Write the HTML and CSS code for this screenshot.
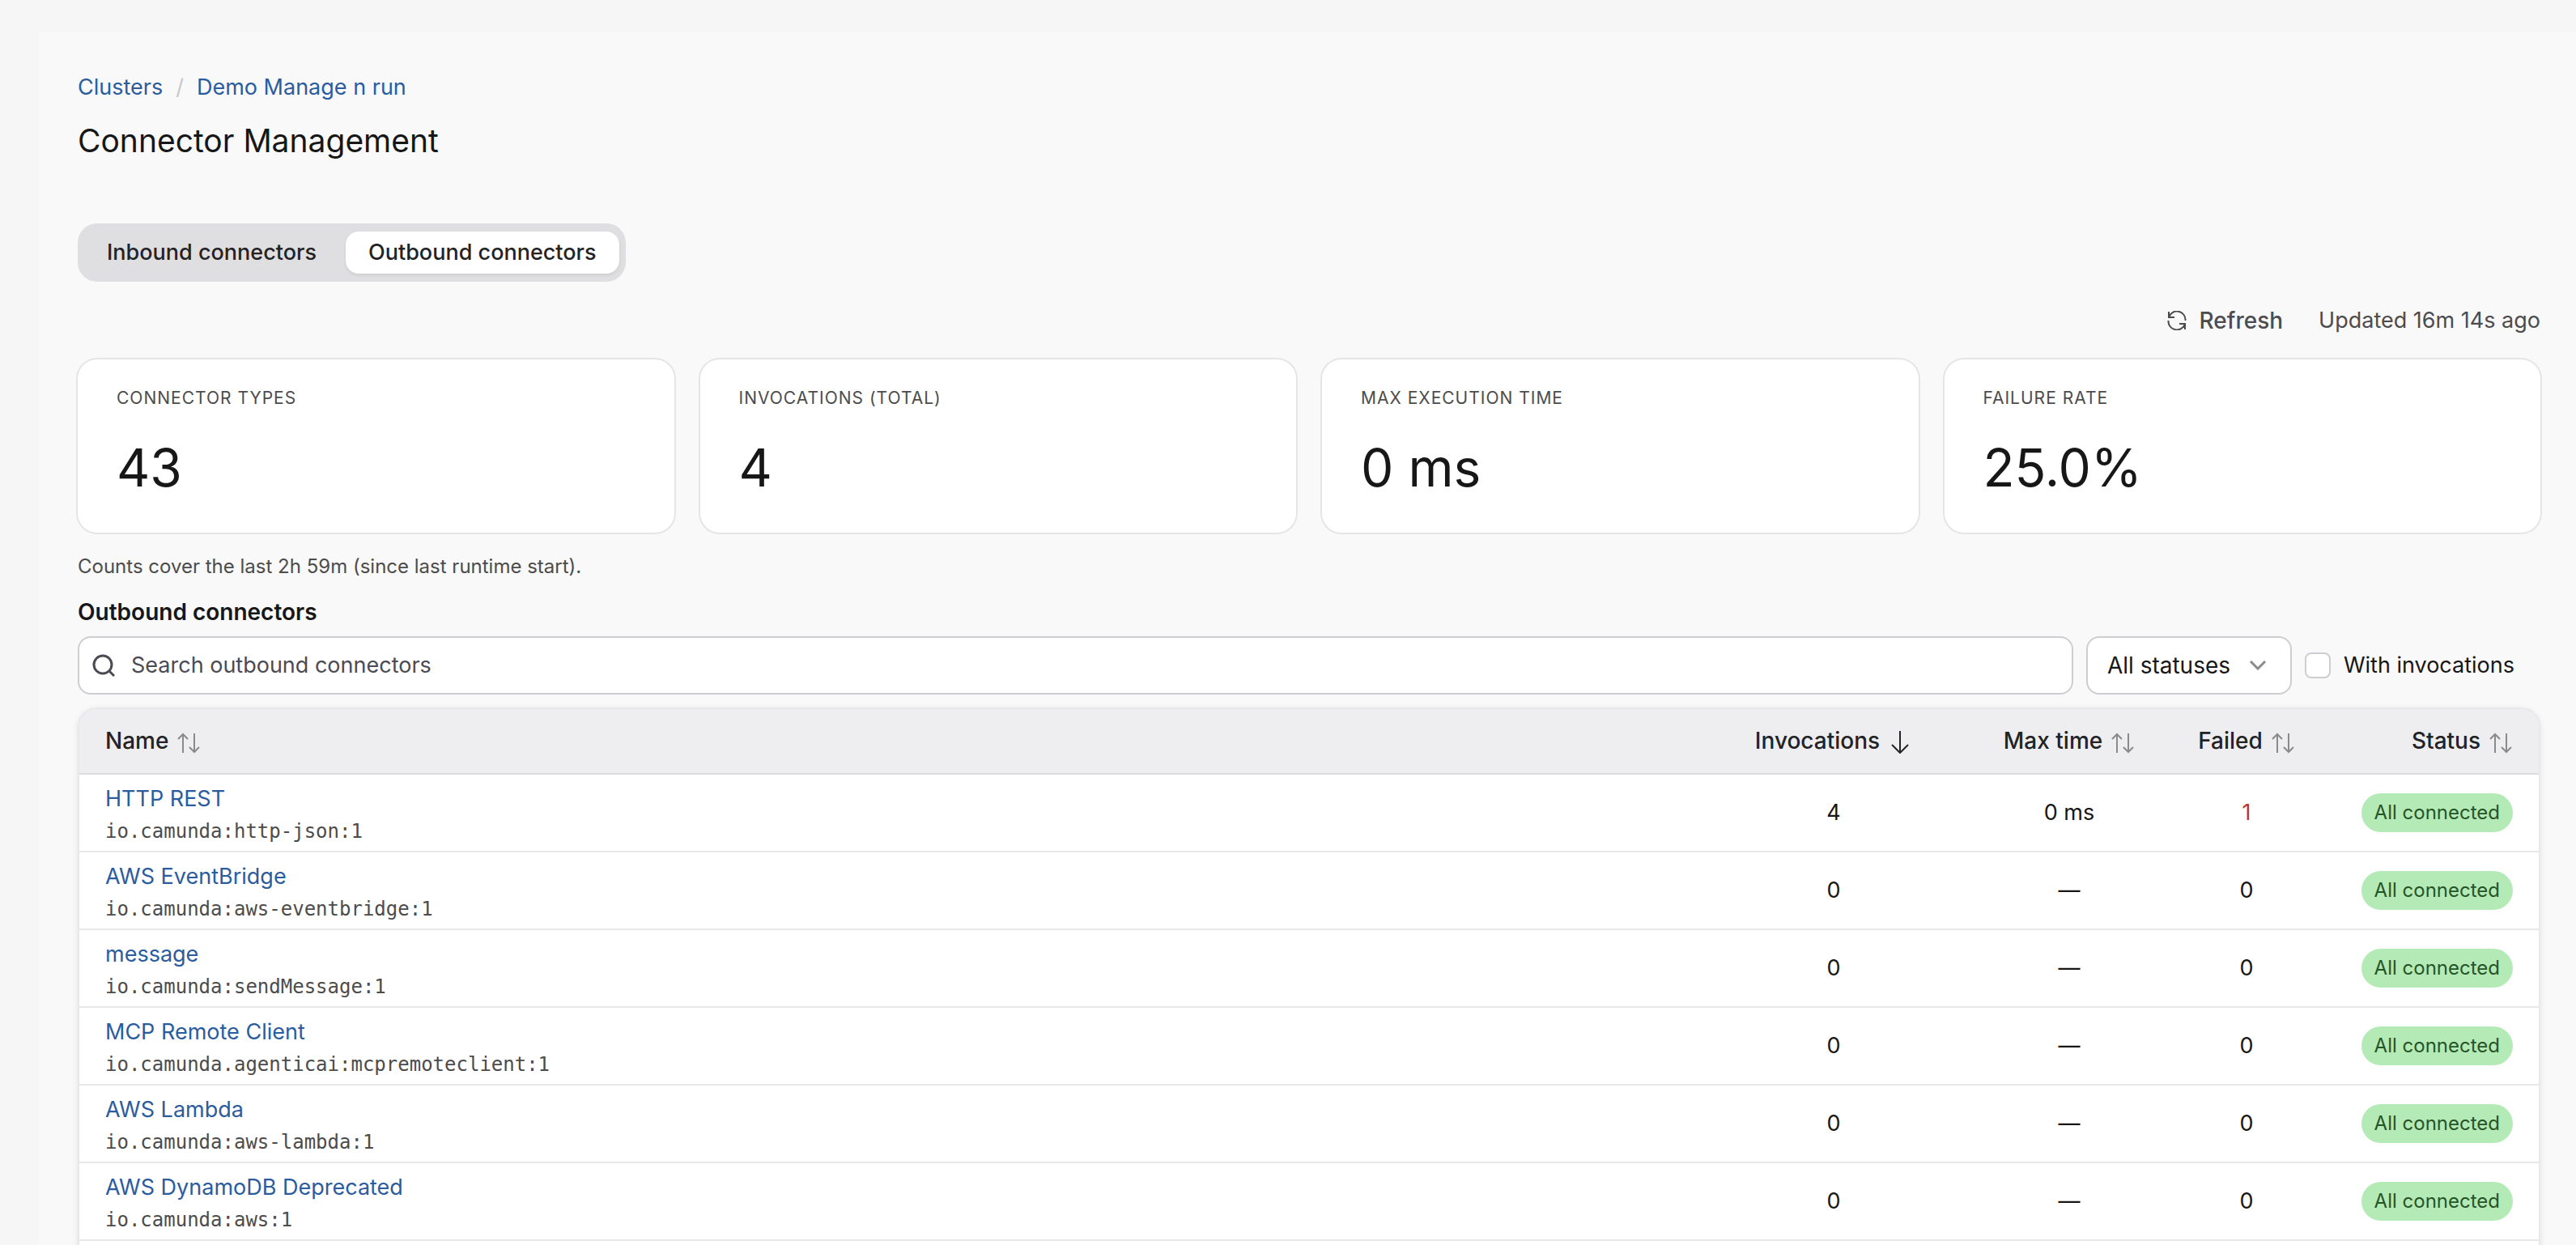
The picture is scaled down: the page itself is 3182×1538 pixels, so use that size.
FILE: index.html
```
<!DOCTYPE html>
<html lang="en">
<head>
    <meta charset="UTF-8">
    <meta name="viewport" content="width=device-width, initial-scale=1.0">
    <title>Connector Management</title>
    <link rel="stylesheet" href="styles.css">
</head>
<body>
    <!-- Icons -->
    <svg class="sprite" aria-hidden="true">
        <symbol id="icon-sort" viewBox="0 0 32 32">
            <path d="M10 31V8M4 14l6-6 6 6M24 7v23M18 24l6 6 6-6" />
        </symbol>
        <symbol id="icon-down" viewBox="0 0 32 32">
            <path d="M17 4v27M7 21l10 10 10-10" />
        </symbol>
    </svg>

    <main class="panel">
        <nav class="breadcrumb">
            <a href="#">Clusters</a>
            <span>/</span>
            <a href="#">Demo Manage n run</a>
        </nav>
        <h1>Connector Management</h1>

        <div class="tabs">
            <button class="tab">Inbound connectors</button>
            <button class="tab active">Outbound connectors</button>
        </div>

        <div class="actions">
            <button class="refresh">
                <svg viewBox="0 0 24 24"><path d="M2 1v7h7M2 8A10.5 10.5 0 0 1 22.500 12M22 23v-7h-7M22 16A10.5 10.5 0 0 1 1.500 12" /></svg>
                Refresh
            </button>
            <span>Updated 16m 14s ago</span>
        </div>

        <!-- Summary cards -->
        <section class="cards">
            <div class="card">
                <h2>Connector types</h2>
                <p>43</p>
            </div>
            <div class="card">
                <h2>Invocations (total)</h2>
                <p>4</p>
            </div>
            <div class="card">
                <h2>Max execution time</h2>
                <p>0 ms</p>
            </div>
            <div class="card">
                <h2>Failure rate</h2>
                <p>25.0%</p>
            </div>
        </section>
        <p class="note">Counts cover the last 2h 59m (since last runtime start).</p>

        <h3>Outbound connectors</h3>
        <div class="filters">
            <label class="search">
                <svg viewBox="0 0 28 28"><circle cx="13" cy="13" r="11" /><path d="M21 21l6 6" /></svg>
                <input type="text" placeholder="Search outbound connectors" aria-label="Search outbound connectors">
            </label>
            <div class="status-filter">
                <select aria-label="Status">
                    <option>All statuses</option>
                </select>
                <svg viewBox="0 0 20 12"><path d="M1 1l9 9 9-9" /></svg>
            </div>
            <label class="check">
                <input type="checkbox">
                With invocations
            </label>
        </div>

        <!-- Connector table -->
        <div class="table-wrap">
            <table>
                <colgroup>
                    <col>
                    <col class="col-invocations">
                    <col class="col-time">
                    <col class="col-failed">
                    <col class="col-status">
                </colgroup>
                <thead>
                    <tr>
                        <th><button>Name <svg><use href="#icon-sort" /></svg></button></th>
                        <th><button class="sorted">Invocations <svg><use href="#icon-down" /></svg></button></th>
                        <th><button>Max time <svg><use href="#icon-sort" /></svg></button></th>
                        <th><button>Failed <svg><use href="#icon-sort" /></svg></button></th>
                        <th><button>Status <svg><use href="#icon-sort" /></svg></button></th>
                    </tr>
                </thead>
                <tbody>
                    <tr>
                        <td><a href="#">HTTP REST</a><code>io.camunda:http-json:1</code></td>
                        <td>4</td>
                        <td>0 ms</td>
                        <td class="failed">1</td>
                        <td><span class="badge">All connected</span></td>
                    </tr>
                    <tr>
                        <td><a href="#">AWS EventBridge</a><code>io.camunda:aws-eventbridge:1</code></td>
                        <td>0</td>
                        <td>—</td>
                        <td>0</td>
                        <td><span class="badge">All connected</span></td>
                    </tr>
                    <tr>
                        <td><a href="#">message</a><code>io.camunda:sendMessage:1</code></td>
                        <td>0</td>
                        <td>—</td>
                        <td>0</td>
                        <td><span class="badge">All connected</span></td>
                    </tr>
                    <tr>
                        <td><a href="#">MCP Remote Client</a><code>io.camunda.agenticai:mcpremoteclient:1</code></td>
                        <td>0</td>
                        <td>—</td>
                        <td>0</td>
                        <td><span class="badge">All connected</span></td>
                    </tr>
                    <tr>
                        <td><a href="#">AWS Lambda</a><code>io.camunda:aws-lambda:1</code></td>
                        <td>0</td>
                        <td>—</td>
                        <td>0</td>
                        <td><span class="badge">All connected</span></td>
                    </tr>
                    <tr>
                        <td><a href="#">AWS DynamoDB Deprecated</a><code>io.camunda:aws:1</code></td>
                        <td>0</td>
                        <td>—</td>
                        <td>0</td>
                        <td><span class="badge">All connected</span></td>
                    </tr>
                </tbody>
            </table>
        </div>
    </main>
</body>
</html>
```
FILE: styles.css
```
* {
    box-sizing: border-box;
}
body {
    margin: 0;
    padding: 40px 0 0 48px;
    background-color: #f6f6f6;
    color: #171717;
    font-family: Inter, "Liberation Sans", sans-serif;
    font-size: 27px;
    line-height: 40px;
}
h1, h2, h3, p {
    margin: 0;
    font-weight: 400;
}
a {
    color: #2a5c9e;
    text-decoration: none;
}
button, input, select {
    font: inherit;
    color: inherit;
}
button {
    border: none;
    padding: 0;
    background: none;
    cursor: pointer;
}
svg {
    fill: none;
    stroke: currentColor;
    stroke-width: 2;
    flex-shrink: 0;
}
.sprite {
    display: none;
}
.panel {
    padding: 48px 44px 0 48px;
    background-color: #f9f9f9;
}
.breadcrumb {
    display: flex;
    gap: 16px;
}
.breadcrumb span {
    color: #c8c8c8;
}
h1 {
    margin-top: 20px;
    font-size: 39px;
    line-height: 52px;
}
.tabs {
    display: inline-flex;
    height: 72px;
    margin-top: 76px;
    padding: 10px 8px;
    border-radius: 24px;
    background-color: #dfdfe1;
}
.tab {
    padding: 0 28px;
    border-radius: 16px;
    color: #232326;
    font-weight: 500;
}
.tab.active {
    margin-left: 8px;
    background-color: white;
    box-shadow: 0 2px 4px rgba(0, 0, 0, 0.08);
}
.actions {
    display: flex;
    justify-content: flex-end;
    gap: 44px;
    margin: 28px 0;
    color: #4c4c4f;
}
.refresh {
    display: flex;
    align-items: center;
    gap: 16px;
    font-size: 28px;
    font-weight: 500;
}
.refresh svg {
    width: 24px;
    height: 24px;
}
.cards {
    display: grid;
    grid-template-columns: repeat(4, 1fr);
    gap: 32px;
}
.card {
    padding: 32px 48px 40px;
    border-radius: 24px;
    background-color: white;
    box-shadow: 0 0 0 2px #e5e5e5;
}
.card h2 {
    color: #4c4c4c;
    font-size: 21px;
    line-height: 32px;
    letter-spacing: 1px;
    text-transform: uppercase;
}
.card p {
    margin-top: 30px;
    font-size: 64px;
    line-height: 80px;
}
.note {
    margin-top: 26px;
    color: #4c4c4c;
    font-size: 24px;
    line-height: 32px;
}
h3 {
    margin: 20px 0 10px;
    font-size: 28px;
    font-weight: 600;
}
.filters {
    display: flex;
    align-items: center;
    gap: 16px;
    padding-right: 32px;
}
.search {
    display: flex;
    flex: 1;
    align-items: center;
    height: 72px;
    padding-left: 16px;
    border: 2px solid #cdcdd2;
    border-radius: 16px;
    background-color: white;
    color: #4b4b55;
}
.search svg {
    width: 28px;
    height: 28px;
    stroke-width: 3;
}
.search input {
    flex: 1;
    padding: 0 20px;
    border: none;
    outline: none;
    background: none;
}
.search input::placeholder {
    color: #4b4b55;
}
.status-filter {
    position: relative;
}
.status-filter select {
    width: 254px;
    height: 72px;
    padding: 0 24px;
    border: 2px solid #cdcdd2;
    border-radius: 16px;
    background-color: white;
    font-size: 28px;
    appearance: none;
}
.status-filter svg {
    position: absolute;
    right: 32px;
    top: 30px;
    width: 20px;
    height: 12px;
    color: #8a8a8a;
    stroke-width: 3;
    pointer-events: none;
}
.check {
    display: flex;
    align-items: center;
    gap: 16px;
}
.check input {
    width: 32px;
    height: 32px;
    margin: 0;
    border: 2px solid #cdcdd2;
    border-radius: 8px;
    background-color: white;
    appearance: none;
}
.table-wrap {
    margin-top: 16px;
    padding-bottom: 8px;
    overflow: hidden;
    border: 2px solid #e8e8e8;
    border-bottom: none;
    border-radius: 24px 24px 0 0;
    background-color: white;
    box-shadow: 0 2px 6px 2px rgba(0, 0, 0, 0.06);
}
table {
    width: 100%;
    border-collapse: separate;
    border-spacing: 0;
    table-layout: fixed;
}
.col-invocations {
    width: 346px;
}
.col-time {
    width: 236px;
}
.col-failed {
    width: 202px;
}
.col-status {
    width: 260px;
}
th {
    height: 81px;
    padding: 0 32px;
    border-bottom: 2px solid #dcdcdf;
    background-color: #eeeef0;
}
th button {
    display: inline-flex;
    align-items: center;
    gap: 8px;
    color: #232326;
    font-size: 28px;
    font-weight: 500;
    white-space: nowrap;
}
th svg {
    width: 32px;
    height: 32px;
    color: #8a8a8c;
}
th .sorted svg {
    color: #232326;
}
td {
    height: 96px;
    padding: 6px 32px;
    border-bottom: 2px solid #e8e8e8;
    text-align: center;
}
th:nth-child(3), th:nth-child(4) {
    padding: 0 16px;
}
th:first-child, td:first-child {
    text-align: left;
}
th:last-child, td:last-child {
    text-align: right;
}
td:first-child {
    padding: 10px 32px 4px;
}
td a {
    display: block;
}
code {
    display: block;
    color: #4c4c4c;
    font-family: "DejaVu Sans Mono", monospace;
    font-size: 24px;
}
.failed {
    color: #c0322b;
}
.badge {
    display: inline-block;
    padding: 4px 16px;
    border-radius: 24px;
    background-color: #b4eab6;
    color: #275427;
    font-size: 24px;
}
```
